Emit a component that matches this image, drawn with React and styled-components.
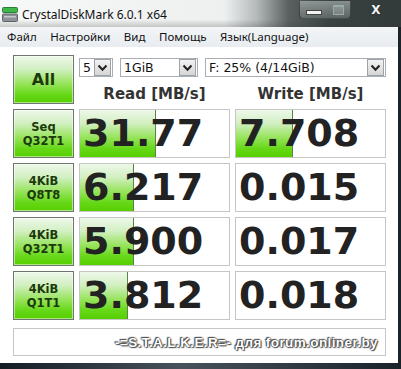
import React from 'react';
import styled, { createGlobalStyle } from 'styled-components';

const GlobalStyle = createGlobalStyle`
  html, body {
    margin: 0;
    padding: 0;
    background: #1d252b;
  }
  body {
    width: 401px;
    height: 369px;
    overflow: hidden;
  }
`;

const Window = styled.div`
  width: 401px;
  height: 369px;
  display: flex;
  flex-direction: column;
  background: linear-gradient(to right, #141c24 0%, #48525c 45%, #1a222a 100%);
  overflow: hidden;
`;

const TitleBar = styled.div`
  height: 27px;
  flex: none;
  display: flex;
  align-items: center;
  padding-left: 2px;
  background:
    linear-gradient(to bottom, rgba(0, 0, 0, 0) 72%, rgba(60, 60, 60, 0.25) 100%),
    linear-gradient(to right, #f7f8f8 0%, #eef0f0 56%, #b4b9b9 64%, #59605f 72%, #3a4242 82%, #323a3a 100%);
`;

const AppIcon = styled.svg`
  width: 16px;
  height: 15px;
  flex: none;
  margin-top: 1px;
`;

const TitleText = styled.span`
  font-family: "Noto Sans", "Open Sans", sans-serif;
  font-size: 12px;
  color: #111;
  margin-left: 4px;
  margin-top: 1px;
`;

const Controls = styled.div`
  margin-left: auto;
  align-self: flex-start;
  display: flex;
  gap: 3px;
  margin-top: 1px;
  margin-right: 3px;
`;

const ControlGroup = styled.div`
  width: 50px;
  height: 17px;
  display: flex;
  align-items: center;
  justify-content: space-around;
  background: linear-gradient(to bottom, rgba(200, 206, 206, 0.55), rgba(120, 128, 128, 0.55));
  border: 1px solid rgba(30, 34, 34, 0.6);
  border-top: none;
  border-radius: 0 0 4px 4px;
`;

const CloseButton = styled.div`
  width: 44px;
  height: 17px;
  display: flex;
  align-items: center;
  justify-content: center;
  font-family: "DejaVu Sans", sans-serif;
  font-weight: bold;
  font-size: 12px;
  color: #f4f4f4;
  text-shadow: 0 0 2px #222;
`;

const MinGlyph = styled.div`
  width: 14px;
  height: 3px;
  margin-top: 5px;
  background: #f2f2f2;
  border: 1px solid #444;
`;

const MaxGlyph = styled.div`
  width: 9px;
  height: 7px;
  border: 1px solid #9aa;
  border-top-width: 2px;
  background: rgba(255, 255, 255, 0.15);
`;

const MenuBar = styled.div`
  height: 20px;
  flex: none;
  display: flex;
  align-items: center;
  gap: 13.5px;
  padding-left: 7px;
  margin-right: 3px;
  background: linear-gradient(to bottom, #f3f5f7, #e8ecf0);
  font-family: "Noto Sans", "Open Sans", sans-serif;
  font-size: 11.5px;
  color: #111;
`;

const MenuItem = styled.span`
  line-height: 20px;
`;

const Content = styled.div`
  height: 316px;
  flex: none;
  margin-right: 3px;
  box-sizing: border-box;
  background: #fff;
  padding: 8px 0 0 13px;
`;

const Grid = styled.div`
  display: grid;
  grid-template-columns: 61px 151px 151px;
  grid-template-rows: 49px 49px 49px 49px 49px 31px;
  column-gap: 5px;
  row-gap: 5px;
`;

const greenFill = `linear-gradient(to bottom, #eef8ea 0%, #d2efc2 28%, #98e45e 58%, #66d818 82%, #56cf00 100%)`;

const GreenButton = styled.div`
  box-sizing: border-box;
  border: 1px solid #6f7670;
  background: ${greenFill};
  box-shadow: inset 0 0 0 1px rgba(255, 255, 255, 0.5);
  display: flex;
  flex-direction: column;
  align-items: center;
  justify-content: center;
  font-family: "DejaVu Sans", Verdana, sans-serif;
  font-weight: bold;
  color: #1c3a0c;
  font-size: ${(p) => (p.$big ? '16px' : '11.5px')};
  line-height: ${(p) => (p.$big ? '18px' : '14px')};
`;

const TopRight = styled.div`
  grid-column: 2 / 4;
  display: flex;
  flex-direction: column;
`;

const SelectRow = styled.div`
  display: flex;
  gap: 7px;
  margin-top: 3px;
  height: 19px;
`;

const Select = styled.div`
  box-sizing: border-box;
  width: ${(p) => p.$w || 'auto'};
  flex: ${(p) => (p.$w ? 'none' : '1')};
  height: 19px;
  border: 1px solid #a9aeb4;
  background: #fff;
  display: flex;
  align-items: center;
  padding-left: 3px;
  font-family: "DejaVu Sans", Verdana, sans-serif;
  font-size: 12.5px;
  color: #111;
`;

const SelectValue = styled.span`
  flex: 1;
  white-space: nowrap;
`;

const Arrow = styled.div`
  box-sizing: border-box;
  width: 17px;
  height: 17px;
  margin-right: 1px;
  border: 1px solid #9ea3a8;
  background: linear-gradient(to bottom, #f2f2f2, #d6d6d6);
  display: flex;
  align-items: center;
  justify-content: center;
`;

const HeaderRow = styled.div`
  display: grid;
  grid-template-columns: 151px 151px;
  column-gap: 5px;
  margin-top: 7px;
`;

const Header = styled.div`
  text-align: center;
  font-family: "DejaVu Sans", Verdana, sans-serif;
  font-weight: bold;
  font-size: 15px;
  line-height: 20px;
  color: #333;
`;

const ValueBox = styled.div`
  position: relative;
  box-sizing: border-box;
  border: 1px solid #c6c6c6;
  background: #fff;
  overflow: hidden;
`;

const Bar = styled.div`
  position: absolute;
  left: 0;
  top: 0;
  bottom: 0;
  background: ${greenFill};
  border-right: 1px solid #58844a;
`;

const Value = styled.div`
  position: relative;
  padding-left: 3px;
  font-family: "DejaVu Sans", Verdana, sans-serif;
  font-weight: bold;
  font-size: 38px;
  line-height: 47px;
  color: #222;
`;

const Footer = styled.div`
  grid-column: 1 / 4;
  margin-top: 3px;
  box-sizing: border-box;
  border: 1px solid #c6c6c6;
  background: #fff;
  display: flex;
  align-items: center;
  justify-content: flex-end;
  padding-right: 7px;
  font-family: "Liberation Sans", Arial, sans-serif;
  font-weight: bold;
  font-size: 13.5px;
  letter-spacing: 0.4px;
  color: #fff;
  text-shadow: 0 0 1px #333, 0 0 2px #333, 1px 1px 1px #555, -1px -1px 1px #555;
`;

const Chevron = () => (
  <svg width="11" height="8" viewBox="0 0 11 8">
    <path d="M1.5 1.5 L5.5 5.8 L9.5 1.5" fill="none" stroke="#222" strokeWidth="2" />
  </svg>
);

const rows = [
  { label: ['Seq', 'Q32T1'], read: '31.77', readBar: 75, write: '7.708', writeBar: 56 },
  { label: ['4KiB', 'Q8T8'], read: '6.217', readBar: 53, write: '0.015', writeBar: 0 },
  { label: ['4KiB', 'Q32T1'], read: '5.900', readBar: 53, write: '0.017', writeBar: 0 },
  { label: ['4KiB', 'Q1T1'], read: '3.812', readBar: 47, write: '0.018', writeBar: 0 },
];

const Cell = ({ value, bar }) => (
  <ValueBox>
    {bar > 0 && <Bar style={{ width: bar }} />}
    <Value>{value}</Value>
  </ValueBox>
);

export default function App() {
  return (
    <Window>
      <GlobalStyle />
      <TitleBar>
        <AppIcon viewBox="0 0 16 15">
          <rect x="0.5" y="0.5" width="15" height="5" rx="1" fill="#3fb84a" stroke="#2a7d33" />
          <rect x="0.5" y="7" width="15" height="7.5" rx="1" fill="#8c9296" stroke="#5e6468" />
          <rect x="2" y="9" width="12" height="1.5" fill="#c6cacc" />
        </AppIcon>
        <TitleText>CrystalDiskMark 6.0.1 x64</TitleText>
        <Controls>
          <ControlGroup>
            <MinGlyph />
            <MaxGlyph />
          </ControlGroup>
          <CloseButton>X</CloseButton>
        </Controls>
      </TitleBar>
      <MenuBar>
        <MenuItem>Файл</MenuItem>
        <MenuItem>Настройки</MenuItem>
        <MenuItem>Вид</MenuItem>
        <MenuItem>Помощь</MenuItem>
        <MenuItem>Язык(Language)</MenuItem>
      </MenuBar>
      <Content>
        <Grid>
          <GreenButton $big>All</GreenButton>
          <TopRight>
            <SelectRow>
              <Select $w="34px">
                <SelectValue>5</SelectValue>
                <Arrow><Chevron /></Arrow>
              </Select>
              <Select $w="78px">
                <SelectValue>1GiB</SelectValue>
                <Arrow><Chevron /></Arrow>
              </Select>
              <Select>
                <SelectValue>F: 25% (4/14GiB)</SelectValue>
                <Arrow><Chevron /></Arrow>
              </Select>
            </SelectRow>
            <HeaderRow>
              <Header>Read [MB/s]</Header>
              <Header>Write [MB/s]</Header>
            </HeaderRow>
          </TopRight>
          {rows.map((r) => (
            <React.Fragment key={r.label.join(' ')}>
              <GreenButton>
                <span>{r.label[0]}</span>
                <span>{r.label[1]}</span>
              </GreenButton>
              <Cell value={r.read} bar={r.readBar} />
              <Cell value={r.write} bar={r.writeBar} />
            </React.Fragment>
          ))}
          <Footer>-=S.T.A.L.K.E.R=- для forum.onliner.by</Footer>
        </Grid>
      </Content>
    </Window>
  );
}
